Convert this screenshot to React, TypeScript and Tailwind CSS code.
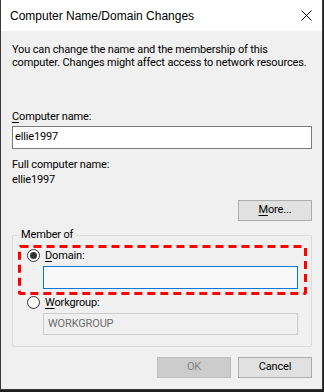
import React from "react";

const font = "font-['Roboto','Liberation_Sans',Arial,sans-serif]";

function Radio({ checked }: { checked?: boolean }) {
  return (
    <span className="flex h-[13px] w-[13px] items-center justify-center rounded-full border border-[#333333] bg-white">
      {checked && <span className="h-[7px] w-[7px] rounded-full bg-[#333333]" />}
    </span>
  );
}

function Button({ children, disabled }: { children: React.ReactNode; disabled?: boolean }) {
  return (
    <div
      className={
        disabled
          ? "flex h-[21px] w-[74px] items-center justify-center border border-[#bfbfbf] bg-[#cccccc] text-[#838383]"
          : "flex h-[21px] w-[74px] items-center justify-center border border-[#adadad] bg-[#e1e1e1] text-black"
      }
    >
      {children}
    </div>
  );
}

export default function App() {
  return (
    <div className={`${font} flex h-[392px] w-[324px] flex-col bg-[#1f1f1f] text-[11px] tracking-[-0.15px] text-black`}>
      <div className="flex h-[390px] w-[323px] flex-col border-x border-b border-[#3a3a3a] bg-[#f0f0f0]">
        {/* title bar */}
        <div className="flex h-[31px] shrink-0 items-center justify-between bg-white pl-[9px] pr-[9px]">
          <span className="font-['Liberation_Sans',Arial,sans-serif] text-[12px] leading-none tracking-normal">
            Computer Name/Domain Changes
          </span>
          <svg width="11" height="11" viewBox="0 0 11 11" className="mr-[1px]">
            <path d="M0.5 0.5 L10.5 10.5 M10.5 0.5 L0.5 10.5" stroke="#000" strokeWidth="1" />
          </svg>
        </div>

        <div className="flex flex-col pl-[11px] pr-[10px]">
          <p className="mt-[12px] whitespace-nowrap leading-[13px]">
            You can change the name and the membership of this
            <br />
            computer. Changes might affect access to network resources.
          </p>

          <div className="mt-[41px] leading-[13px]">
            <span className="underline underline-offset-2">C</span>omputer name:
          </div>
          <div className="mt-[3px] flex h-[23px] items-center border border-[#7a7a7a] bg-white pl-[2px]">
            ellie1997
          </div>

          <div className="mt-[8px] leading-[15px]">Full computer name:</div>
          <div className="leading-[15px]">ellie1997</div>

          <div className="mt-[13px] flex justify-end">
            <Button>
              <span className="underline underline-offset-2">M</span>ore...
            </Button>
          </div>

          {/* group box */}
          <div className="relative mt-[14px] h-[112px] rounded-[2px] border border-[#dcdcdc]">
            <span className="absolute -top-[8px] left-[6px] bg-[#f0f0f0] px-[2px] leading-[14px]">Member of</span>

            <div className="relative ml-[5px] mr-[5px] mt-[9px] h-[50px]">
              <svg className="absolute inset-0" width="289" height="50" viewBox="0 0 289 50">
                <rect
                  x="1.5"
                  y="1.5"
                  width="286"
                  height="47"
                  fill="none"
                  stroke="#ff0000"
                  strokeWidth="3"
                  strokeDasharray="8 5"
                  rx="1"
                />
              </svg>
              <div className="flex items-center gap-[5px] pl-[9px] pt-[4px]">
                <Radio checked />
                <span className="leading-[13px]">
                  <span className="underline underline-offset-2">D</span>omain:
                </span>
              </div>
              <div className="relative ml-[25px] mt-[4px] h-[23px] w-[255px] border border-solid border-[#0078d7] bg-[#f8f8f8]" />
            </div>

            <div className="ml-[14px] mt-[1px] flex items-center gap-[5px]">
              <Radio />
              <span className="leading-[13px]">
                <span className="underline underline-offset-2">W</span>orkgroup:
              </span>
            </div>
            <div className="ml-[30px] mt-[4px] flex h-[22px] w-[255px] items-center border border-[#cccccc] bg-[#f0f0f0] pl-[4px] text-[#6d6d6d]">
              WORKGROUP
            </div>
          </div>

          <div className="mt-[10px] flex justify-end gap-[7px]">
            <Button disabled>OK</Button>
            <Button>Cancel</Button>
          </div>
        </div>
      </div>
    </div>
  );
}
